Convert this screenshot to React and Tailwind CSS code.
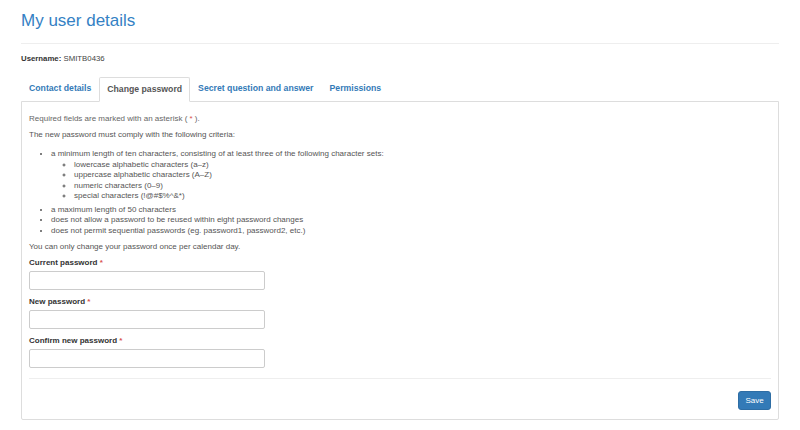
import { useState } from "react";

const tabs = ["Contact details", "Change password", "Secret question and answer", "Permissions"];

const criteria = [
  "lowercase alphabetic characters (a–z)",
  "uppercase alphabetic characters (A–Z)",
  "numeric characters (0–9)",
  "special characters (!@#$%^&*)",
];

function Field({ label }) {
  return (
    <div className="mb-[7px]">
      <label className="block text-[8px] leading-[10px] font-bold text-[#333] mb-[3px]">
        {label} <span className="text-[#d9534f]">*</span>
      </label>
      <input
        type="password"
        className="block w-[236px] h-[19px] border border-[#ccc] rounded-[2px] bg-white px-[6px] text-[8px] outline-none"
      />
    </div>
  );
}

export default function App() {
  const [active, setActive] = useState(1);

  return (
    <div
      className="min-h-screen bg-white px-[21px] pt-[10px] text-[#555]"
      style={{ fontFamily: '"Liberation Sans", Arial, sans-serif' }}
    >
      <h1 className="text-[17px] leading-[22px] text-[#3481c4] font-normal">My user details</h1>
      <div className="mt-[11px] border-t border-[#eee]" />

      <p className="mt-[9px] text-[7.8px] leading-[12px] text-[#444]">
        <strong className="text-[#333]">Username:</strong> SMITB0436
      </p>

      {/* Tabs */}
      <div className="mt-[12px] flex">
        {tabs.map((t, i) => (
          <button
            key={t}
            onClick={() => setActive(i)}
            className={
              i === active
                ? "relative z-10 -mb-px h-[25px] px-[7px] border border-[#ddd] border-b-white bg-white rounded-t-[2px] text-[8.7px] font-bold text-[#555]"
                : "h-[24px] px-[7px] border border-transparent text-[8.7px] font-bold text-[#337ab7]"
            }
          >
            {t}
          </button>
        ))}
      </div>

      {/* Panel */}
      <div className="border border-[#ddd] rounded-b-[2px] px-[7px] pt-[11px] pb-[9px] text-[8px] leading-[11px]">
        <p className="mb-[5px] text-[#666]">
          Required fields are marked with an asterisk ( <span className="text-[#d9534f]">*</span> ).
        </p>
        <p className="mb-[9px]">The new password must comply with the following criteria:</p>

        <ul className="list-disc pl-[22px] leading-[10.5px] mb-[5px]">
          <li>
            a minimum length of ten characters, consisting of at least three of the following character sets:
            <ul className="list-[circle] pl-[23px]">
              {criteria.map((c) => (
                <li key={c}>{c}</li>
              ))}
            </ul>
          </li>
          <li className="mt-[3px]">a maximum length of 50 characters</li>
          <li>does not allow a password to be reused within eight password changes</li>
          <li>does not permit sequential passwords (eg. password1, password2, etc.)</li>
        </ul>

        <p className="mb-[6px]">You can only change your password once per calendar day.</p>

        <Field label="Current password" />
        <Field label="New password" />
        <Field label="Confirm new password" />

        <div className="mt-[10px] border-t border-[#eee]" />
        <div className="mt-[12px] flex justify-end">
          <button className="h-[19px] w-[33px] rounded-[3px] border border-[#2e6da4] bg-[#337ab7] text-[8px] text-white">
            Save
          </button>
        </div>
      </div>
    </div>
  );
}
